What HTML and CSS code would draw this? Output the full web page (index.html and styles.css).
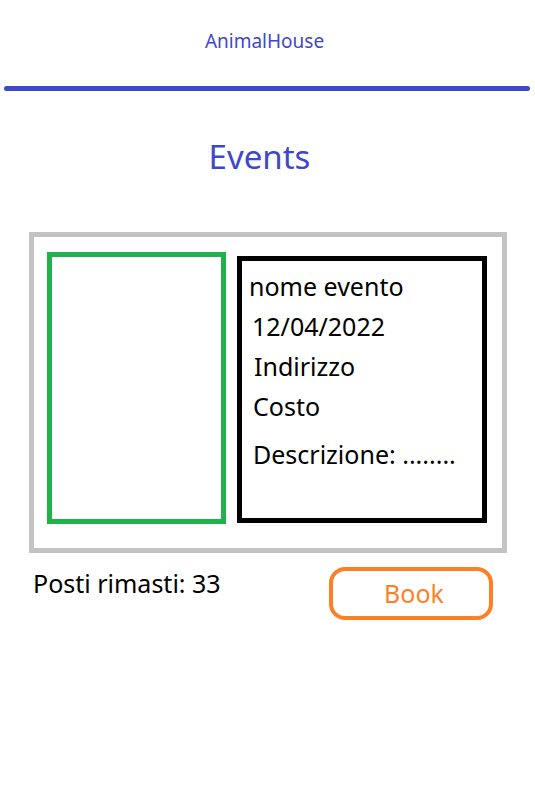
FILE: index.html
```html
<!DOCTYPE html>
<html lang="it">
<head>
<meta charset="utf-8">
<title>AnimalHouse - Events</title>
<link rel="stylesheet" href="styles.css">
</head>
<body>
  <header class="header">
    <div class="brand">AnimalHouse</div>
  </header>
  <div class="rule"></div>
  <h1 class="title">Events</h1>
  <section class="event">
    <div class="card">
      <div class="picture"></div>
      <div class="info">
        <div class="line l-name">nome evento</div>
        <div class="line l-date">12/04/2022</div>
        <div class="line l-addr">Indirizzo</div>
        <div class="line l-cost">Costo</div>
        <div class="line l-desc">Descrizione: ........</div>
      </div>
    </div>
    <div class="footer">
      <div class="seats">Posti rimasti: 33</div>
      <button class="book">Book</button>
    </div>
  </section>
</body>
</html>
```

FILE: styles.css
```css
html, body {
  margin: 0;
  padding: 0;
  background: #ffffff;
}

body {
  font-family: "Noto Sans", "Open Sans", sans-serif;
  color: #000000;
  width: 535px;
}

.header {
  padding-top: 29px;
  display: flex;
  justify-content: center;
}

.brand {
  font-size: 19px;
  line-height: 24px;
  color: #3f48cc;
  padding-right: 6px;
}

.rule {
  margin: 33px 5px 0 4px;
  height: 5px;
  border-radius: 3px;
  background: #3f48cc;
}

.title {
  margin: 46px 0 0 0;
  font-size: 33px;
  line-height: 40px;
  font-weight: normal;
  color: #3f48cc;
  text-align: center;
  padding-right: 16px;
}

.event {
  margin: 55px 0 0 29px;
  width: 478px;
}

.card {
  box-sizing: border-box;
  width: 478px;
  height: 321px;
  border: 5px solid #c3c3c3;
  padding: 15px 0 0 13px;
  display: flex;
  align-items: flex-start;
  gap: 11px;
}

.picture {
  box-sizing: border-box;
  width: 179px;
  height: 272px;
  border: 5px solid #22b14c;
}

.info {
  box-sizing: border-box;
  margin-top: 4px;
  width: 250px;
  height: 267px;
  border: 5px solid #000000;
  padding-top: 5px;
}

.line {
  font-size: 25px;
  line-height: 40px;
  white-space: nowrap;
}

.l-name { margin-left: 7px; }
.l-date { margin-left: 10px; }
.l-addr { margin-left: 12px; }
.l-cost { margin-left: 11px; }
.l-desc { margin-left: 11px; margin-top: 8px; }

.footer {
  display: flex;
  justify-content: space-between;
  align-items: flex-start;
  margin-top: 10px;
  padding: 0 14px 0 4px;
}

.seats {
  font-size: 25px;
  line-height: 40px;
}

.book {
  box-sizing: border-box;
  margin-top: 4px;
  width: 164px;
  height: 53px;
  border: 4px solid #ff7f27;
  border-radius: 16px;
  background: #ffffff;
  color: #ff7f27;
  font-family: "Noto Sans", "Open Sans", sans-serif;
  font-size: 25px;
  line-height: 45px;
  padding: 0 0 0 6px;
}
```
